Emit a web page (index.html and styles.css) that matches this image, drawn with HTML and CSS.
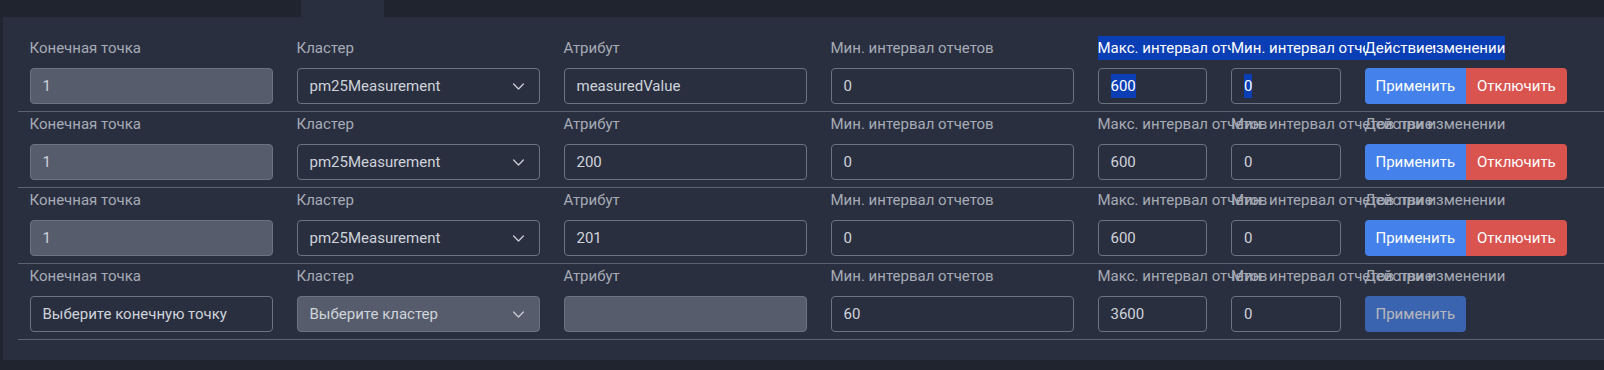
FILE: index.html
```html
<!DOCTYPE html>
<html lang="ru">
<head>
<meta charset="utf-8">
<title>Привязки отчетов</title>
<link rel="stylesheet" href="styles.css">
</head>
<body>
<nav class="tabs">
  <div class="tab"></div>
  <div class="tab tab-active"></div>
  <div class="tab tab-rest"></div>
</nav>
<main class="panel">
  <div class="binding-row">
    <div class="field"><div class="label">Конечная точка</div><div class="control is-disabled">1</div></div>
    <div class="field"><div class="label">Кластер</div><div class="control select"><span>pm25Measurement</span><svg class="chev" viewBox="0 0 16 16" width="13" height="13"><path d="M2 5l6 6 6-6"/></svg></div></div>
    <div class="field"><div class="label">Атрибут</div><div class="control">measuredValue</div></div>
    <div class="field"><div class="label">Мин. интервал отчетов</div><div class="control">0</div></div>
    <div class="field narrow"><div class="label"><span class="sel">Макс. интервал отчетов</span></div><div class="control"><span class="sel">600</span></div></div>
    <div class="field narrow"><div class="label"><span class="sel">Мин. интервал отчетов при изменении</span></div><div class="control"><span class="sel">0</span></div></div>
    <div class="field"><div class="label"><span class="sel">Действие</span></div><div class="btn-group"><button class="btn btn-primary">Применить</button><button class="btn btn-danger">Отключить</button></div></div>
  </div>
  <div class="binding-row">
    <div class="field"><div class="label">Конечная точка</div><div class="control is-disabled">1</div></div>
    <div class="field"><div class="label">Кластер</div><div class="control select"><span>pm25Measurement</span><svg class="chev" viewBox="0 0 16 16" width="13" height="13"><path d="M2 5l6 6 6-6"/></svg></div></div>
    <div class="field"><div class="label">Атрибут</div><div class="control">200</div></div>
    <div class="field"><div class="label">Мин. интервал отчетов</div><div class="control">0</div></div>
    <div class="field narrow"><div class="label">Макс. интервал отчетов</div><div class="control">600</div></div>
    <div class="field narrow"><div class="label">Мин. интервал отчетов при изменении</div><div class="control">0</div></div>
    <div class="field"><div class="label">Действие</div><div class="btn-group"><button class="btn btn-primary">Применить</button><button class="btn btn-danger">Отключить</button></div></div>
  </div>
  <div class="binding-row">
    <div class="field"><div class="label">Конечная точка</div><div class="control is-disabled">1</div></div>
    <div class="field"><div class="label">Кластер</div><div class="control select"><span>pm25Measurement</span><svg class="chev" viewBox="0 0 16 16" width="13" height="13"><path d="M2 5l6 6 6-6"/></svg></div></div>
    <div class="field"><div class="label">Атрибут</div><div class="control">201</div></div>
    <div class="field"><div class="label">Мин. интервал отчетов</div><div class="control">0</div></div>
    <div class="field narrow"><div class="label">Макс. интервал отчетов</div><div class="control">600</div></div>
    <div class="field narrow"><div class="label">Мин. интервал отчетов при изменении</div><div class="control">0</div></div>
    <div class="field"><div class="label">Действие</div><div class="btn-group"><button class="btn btn-primary">Применить</button><button class="btn btn-danger">Отключить</button></div></div>
  </div>
  <div class="binding-row">
    <div class="field"><div class="label">Конечная точка</div><div class="control">Выберите конечную точку</div></div>
    <div class="field"><div class="label">Кластер</div><div class="control select is-disabled"><span>Выберите кластер</span><svg class="chev" viewBox="0 0 16 16" width="13" height="13"><path d="M2 5l6 6 6-6"/></svg></div></div>
    <div class="field"><div class="label">Атрибут</div><div class="control is-disabled"></div></div>
    <div class="field"><div class="label">Мин. интервал отчетов</div><div class="control">60</div></div>
    <div class="field narrow"><div class="label">Макс. интервал отчетов</div><div class="control">3600</div></div>
    <div class="field narrow"><div class="label">Мин. интервал отчетов при изменении</div><div class="control">0</div></div>
    <div class="field"><div class="label">Действие</div><div class="btn-group"><button class="btn btn-primary btn-disabled">Применить</button></div></div>
  </div>
</main>
</body>
</html>
```
FILE: styles.css
```css
html, body {
  margin: 0;
  padding: 0;
  overflow: hidden;
  background: #20242f;
}
body {
  width: 1604px;
  height: 370px;
  font-family: "Segoe UI", Roboto, "Noto Sans", sans-serif;
  font-size: 15px;
  color: #cfd3da;
}
.tabs {
  display: flex;
  height: 17px;
}
.tab {
  width: 301px;
}
.tab-active {
  width: 83px;
  background: #2a2f40;
}
.tab-rest {
  flex: 1;
}
.panel {
  margin-left: 3px;
  width: max-content;
  background: #2a2f40;
  padding: 19px 14px 20px 14.5px;
}
.binding-row {
  display: grid;
  grid-template-columns: repeat(12, 1fr);
  column-gap: 24px;
  width: 1602px;
  box-sizing: border-box;
  padding: 0 12px 7px;
  border-bottom: 1px solid #5c6170;
}
.field {
  grid-column: span 2;
  min-width: 0;
}
.field.narrow {
  grid-column: span 1;
}
.label {
  line-height: 24px;
  height: 24px;
  margin-bottom: 8px;
  white-space: nowrap;
  color: #a6abb5;
}
.sel {
  display: inline-block;
  line-height: 24px;
  background: #0a3eb4;
  color: #ffffff;
}
.control {
  height: 36px;
  box-sizing: border-box;
  border: 1px solid #6c727f;
  border-radius: 4px;
  padding: 0 12px;
  display: flex;
  align-items: center;
  line-height: 24px;
  white-space: nowrap;
  overflow: hidden;
  color: #cfd3da;
}
.control.is-disabled {
  background: #565c6b;
}
.select {
  justify-content: space-between;
}
.chev {
  flex: none;
  margin-right: 2px;
  fill: none;
  stroke: #c9cdd4;
  stroke-width: 1.6;
  stroke-linecap: round;
  stroke-linejoin: round;
}
.btn-group {
  display: inline-flex;
}
.btn {
  height: 36px;
  padding: 0 11px;
  border: none;
  font: inherit;
  line-height: 24px;
  color: #ffffff;
  cursor: pointer;
}
.btn-primary {
  background: #4481eb;
  border-radius: 4px 0 0 4px;
}
.btn-danger {
  background: #d9534f;
  border-radius: 0 4px 4px 0;
}
.btn-disabled {
  border-radius: 4px;
  opacity: 0.65;
}
```
